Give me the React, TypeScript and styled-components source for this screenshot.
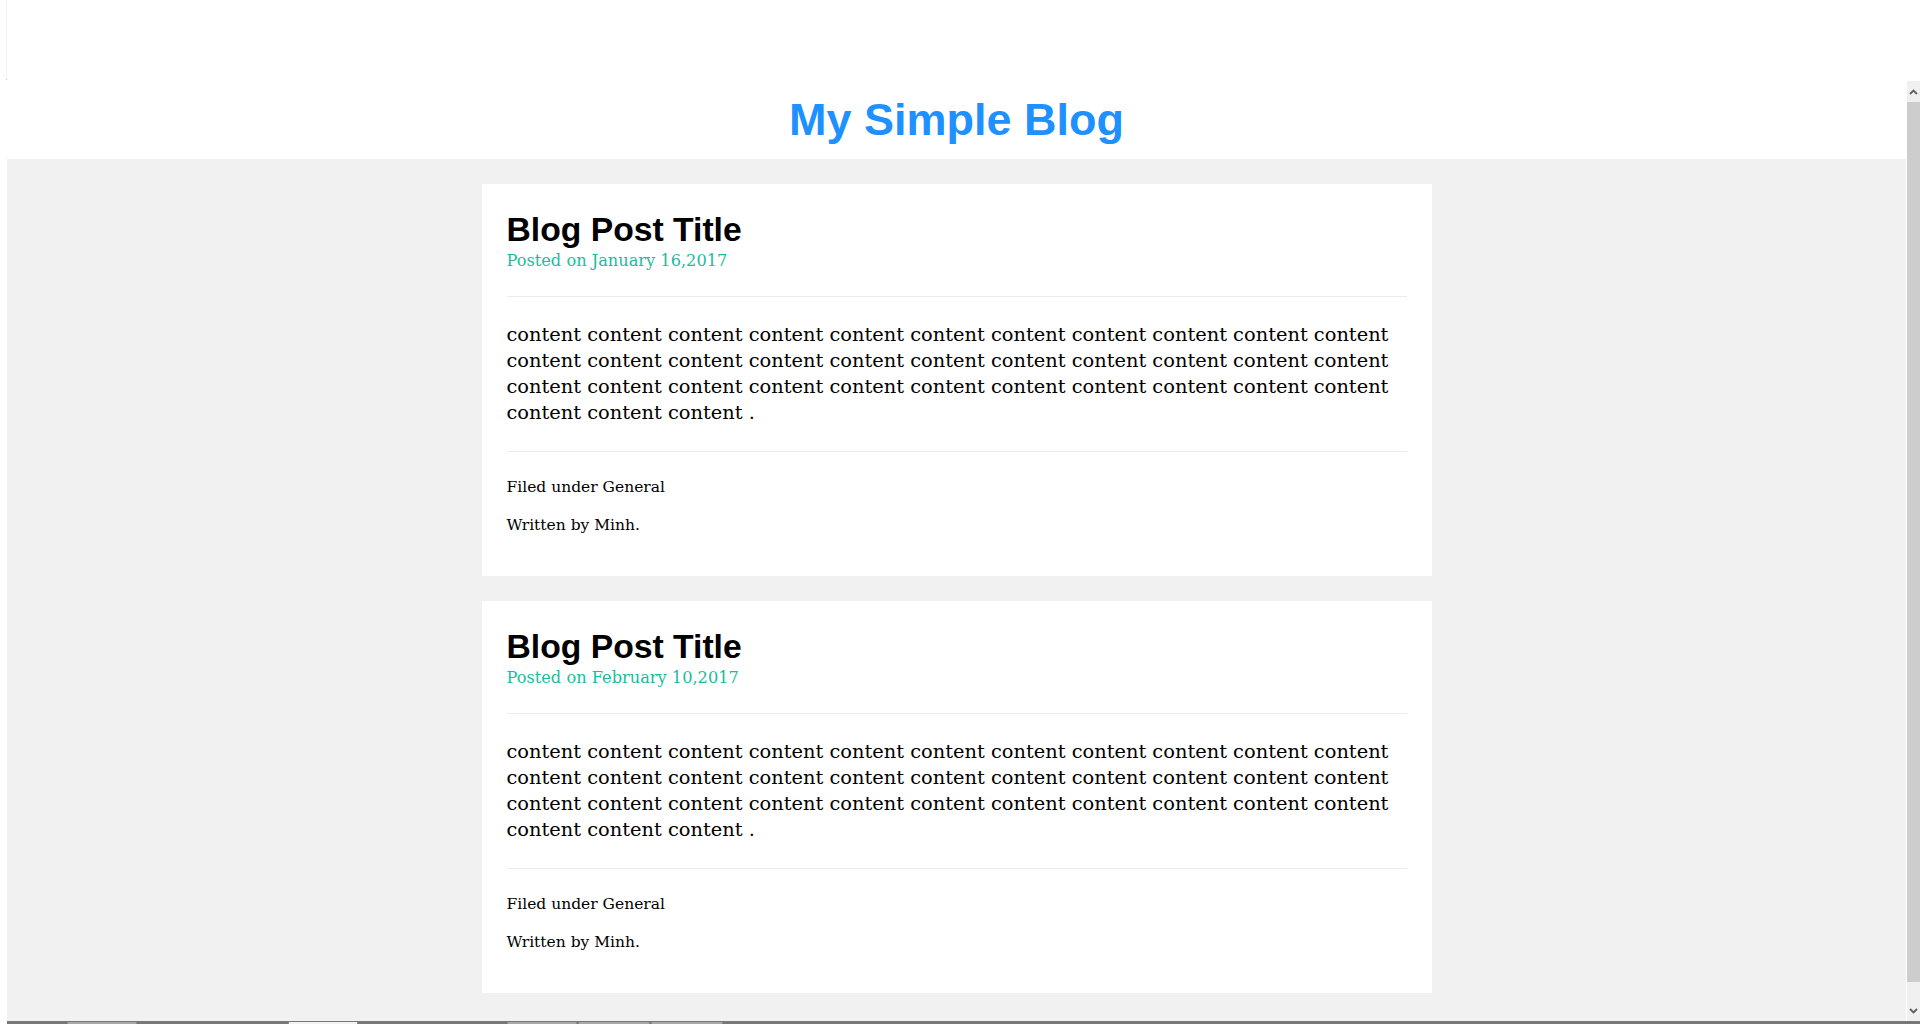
import React from "react";
import styled, { createGlobalStyle } from "styled-components";

const GlobalStyle = createGlobalStyle`
  html, body { margin: 0; padding: 0; background: #fff; overflow: hidden; }
  * { box-sizing: border-box; }
`;

const Screen = styled.div`
  width: 1920px;
  height: 1035px;
  display: flex;
  flex-direction: column;
  background: #fff;
`;

const Window = styled.div`
  height: 1021px;
  display: flex;
`;

const Gutter = styled.div`
  width: 7px;
  display: flex;
  justify-content: flex-end;
`;

const GutterLine = styled.div`
  width: 1px;
  height: 80px;
  background: #f4f4f4;
  border-bottom: 1px solid #c8c8c8;
`;

const Viewport = styled.div`
  flex: 1;
  display: flex;
  flex-direction: column;
  margin-right: 1px;
`;

const Header = styled.header`
  height: 159px;
  padding-top: 94px;
  text-align: center;
  background: #fff;
`;

const SiteTitle = styled.h1`
  margin: 0;
  font-family: "Liberation Sans", Arial, sans-serif;
  font-weight: 700;
  font-size: 45px;
  line-height: 52px;
  color: #1e90ff;
`;

const Main = styled.main`
  flex: 1;
  background: #f1f1f1;
  padding-top: 25px;
  display: flex;
  flex-direction: column;
  align-items: center;
  gap: 25px;
`;

const Card = styled.article`
  width: 950px;
  background: #fff;
  padding: 26px 25px 41px;
  display: flex;
  flex-direction: column;
`;

const PostTitle = styled.h2`
  margin: 0;
  font-family: "Liberation Sans", Arial, sans-serif;
  font-weight: 700;
  font-size: 33.7px;
  line-height: 38px;
  color: #000;
`;

const Meta = styled.p`
  margin: 3px 0 25px;
  font-family: Georgia, "DejaVu Serif", serif;
  font-size: 16.2px;
  line-height: 20px;
  color: #1abc9c;
`;

const Rule = styled.hr`
  margin: 0;
  border: 0;
  height: 1px;
  background: #ececec;
`;

const Body = styled.p`
  margin: 25px 0;
  font-family: Georgia, "DejaVu Serif", serif;
  font-size: 19.4px;
  line-height: 26px;
  color: #000;
`;

const Footer = styled.div`
  margin-top: 25px;
  display: flex;
  flex-direction: column;
  gap: 18px;
`;

const FooterLine = styled.p`
  margin: 0;
  font-family: Georgia, "DejaVu Serif", serif;
  font-size: 15.5px;
  line-height: 20px;
  color: #000;
`;

const Scrollbar = styled.div`
  width: 13px;
  margin-top: 81px;
  display: flex;
  flex-direction: column;
  background: #f0f0f0;
`;

const ScrollButton = styled.div`
  height: 21px;
  display: flex;
  align-items: center;
  justify-content: center;
  color: #606060;
`;

const Thumb = styled.div`
  height: 880px;
  background: #cdcdcd;
`;

const Track = styled.div`
  flex: 1;
`;

const Taskbar = styled.div`
  margin-left: 7px;
  height: 3px;
  background: #777;
  position: relative;
`;

const Tab = styled.div<{ $left: number; $width: number; $active?: boolean }>`
  position: absolute;
  top: 1px;
  left: ${(p) => p.$left}px;
  width: ${(p) => p.$width}px;
  height: 2px;
  background: ${(p) => (p.$active ? "#f2f2f2" : "#a9a9a9")};
  border-left: 1px solid #8a8a8a;
  border-right: 1px solid #8a8a8a;
`;

const Chevron = ({ up }: { up?: boolean }) => (
  <svg width="9" height="6" viewBox="0 0 9 6">
    <polyline
      points={up ? "1,5 4.5,1.5 8,5" : "1,1 4.5,4.5 8,1"}
      fill="none"
      stroke="currentColor"
      strokeWidth="1.8"
    />
  </svg>
);

const content = Array(36).fill("content").join(" ") + " .";

const posts = [
  { date: "January 16,2017" },
  { date: "February 10,2017" },
];

const tabs = [
  { left: 60, width: 70 },
  { left: 281, width: 70, active: true },
  { left: 500, width: 70 },
  { left: 571, width: 72 },
  { left: 644, width: 72 },
];

export default function App() {
  return (
    <>
      <GlobalStyle />
      <Screen>
        <Window>
          <Gutter>
            <GutterLine />
          </Gutter>
          <Viewport>
            <Header>
              <SiteTitle>My Simple Blog</SiteTitle>
            </Header>
            <Main>
              {posts.map((post) => (
                <Card key={post.date}>
                  <PostTitle>Blog Post Title</PostTitle>
                  <Meta>Posted on {post.date}</Meta>
                  <Rule />
                  <Body>{content}</Body>
                  <Rule />
                  <Footer>
                    <FooterLine>Filed under General</FooterLine>
                    <FooterLine>Written by Minh.</FooterLine>
                  </Footer>
                </Card>
              ))}
            </Main>
          </Viewport>
          <Scrollbar>
            <ScrollButton>
              <Chevron up />
            </ScrollButton>
            <Thumb />
            <Track />
            <ScrollButton>
              <Chevron />
            </ScrollButton>
          </Scrollbar>
        </Window>
        <Taskbar>
          {tabs.map((t) => (
            <Tab key={t.left} $left={t.left} $width={t.width} $active={t.active} />
          ))}
        </Taskbar>
      </Screen>
    </>
  );
}
